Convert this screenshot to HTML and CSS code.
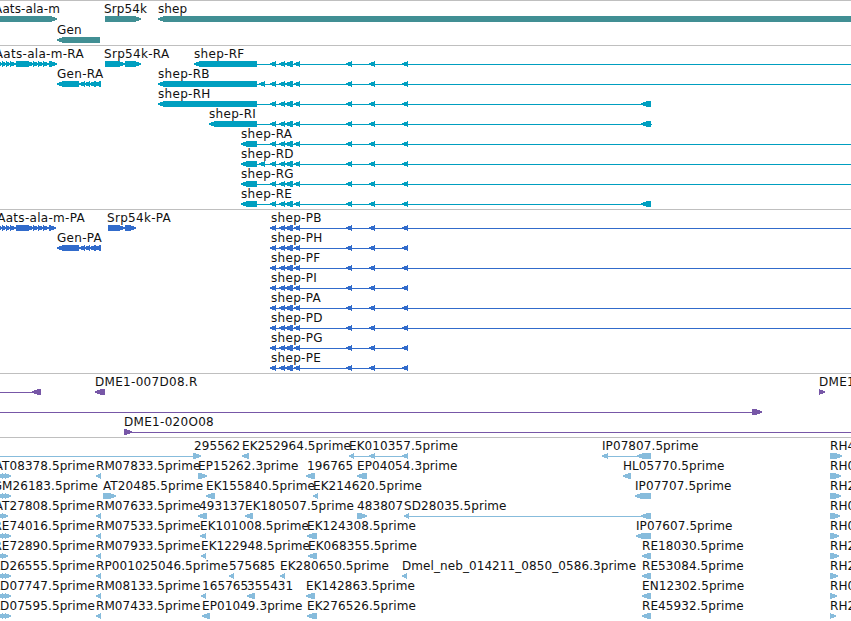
FILE: index.html
```html
<!DOCTYPE html>
<html lang="en">
<head>
  <meta charset="UTF-8">
  <title>Genome tracks</title>
  <link rel="stylesheet" href="styles.css">
</head>
<body>
  <div class="browser">
    <div class="track genes" id="genes"></div>
    <div class="track transcripts" id="transcripts"></div>
    <div class="track proteins" id="proteins"></div>
    <div class="track clones" id="clones"></div>
    <div class="track ests" id="ests"></div>
  </div>
  <script src="tracks.js"></script>
</body>
</html>
```
FILE: styles.css
```css
body {
  margin: 0;
  background-color: #fff;
  overflow: hidden;
}
.browser {
  border-bottom: 1px solid #bfbfbf;
}
.track {
  border-top: 1px solid #bfbfbf;
  padding-bottom: 3px;
}
.track svg {
  display: block;
  width: 100%;
  height: 20px;
  overflow: visible;
}
.track text {
  font-family: "DejaVu Sans", sans-serif;
  font-size: 12px;
  letter-spacing: 0.3px;
  fill: #111;
}
.track polygon, .track rect {
  shape-rendering: crispEdges;
}
.genes {
  fill: #418f94;
  padding-bottom: 2px;
}
.genes svg {
  height: 21px;
}
.genes text {
  letter-spacing: 0.1px;
}
.transcripts {
  fill: #009fc0;
}
.proteins {
  fill: #316bcb;
}
.clones {
  fill: #7757a7;
}
.ests {
  fill: #87bcdc;
}
.ests text {
  letter-spacing: 0.08px;
}
```
FILE: tracks.js
```js
const SVG = 'http://www.w3.org/2000/svg';
const EDGE = 851;

// feature: [label, label x, strand, blocks, line]
// a negative label x is the right end of a label that starts off screen
const aats = [[-2, 3], [2, 7], [6, 11], [10, 16], [16, 34], [33, 39], [38, 44], [43, 49]];
const gen = [[57, 79], [79, 85], [84, 90], [89, 96], [94, 101]];
const cds = [[279, 285], [285, 293], [294, 300], [346, 352], [369, 375], [402, 408]];
const shepExons = [[270, 276], ...cds];

function transcript(name, x, end, extra = []) {
  const blocks = [[x, 257], ...extra, ...shepExons];
  if (end < EDGE) blocks.push([641, 651]);
  return [name, x, '-', blocks, [257, end]];
}

function protein(name, end) {
  return [name, 271, '-', shepExons, [271, end]];
}

function rm(name) {
  return [name + '.5prime', 96, '-', [[96, 101]]];
}

function left(name, end = 95, last = 11) {
  return [name + '.5prime', -end, '+', [[-2, 4], [2, last - 3], [last - 6, last]]];
}

function est(name, x, start, end, strand = '-') {
  return [name, x, strand, [[start, end]]];
}

const tracks = {
  genes: [
    [['Aats-ala-m', -60, '+', [[-10, 57]]], ['Srp54k', 104, '+', [[105, 141]]], ['shep', 158, '-', [[158, 870]]]],
    [['Gen', 57, '-', [[57, 100]]]]
  ],
  transcripts: [
    [['Aats-ala-m-RA', -84, '+', [...aats, [49, 57]]], ['Srp54k-RA', 104, '+', [[105, 125], [125, 141]]], transcript('shep-RF', 194, EDGE)],
    [['Gen-RA', 57, '-', gen], transcript('shep-RB', 158, EDGE, [[259, 265]])],
    [transcript('shep-RH', 158, 651)],
    [transcript('shep-RI', 209, 652)],
    [transcript('shep-RA', 241, EDGE)],
    [transcript('shep-RD', 241, EDGE, [[259, 265]])],
    [transcript('shep-RG', 241, EDGE)],
    [transcript('shep-RE', 241, 651)]
  ],
  proteins: [
    [['Aats-ala-m-PA', -85, '+', [...aats, [49, 56]]], ['Srp54k-PA', 107, '+', [[108, 125], [125, 136]]], protein('shep-PB', EDGE)],
    [['Gen-PA', 57, '-', gen], protein('shep-PH', 408)],
    [protein('shep-PF', EDGE)],
    [protein('shep-PI', 408)],
    [protein('shep-PA', EDGE)],
    [protein('shep-PD', EDGE)],
    [protein('shep-PG', 408)],
    [protein('shep-PE', 408)]
  ],
  clones: [
    [['', 0, '-', [[32, 41]], [0, 33]], ['DME1-007D08.R', 95, '-', [[95, 105]]], ['DME1-', 819, '+', [[819, 825]]]],
    [['', 0, '+', [[752, 762]], [0, 753]]],
    [['DME1-020O08', 124, '+', [[124, 132]], [130, EDGE]]]
  ],
  ests: [
    [['295562', 194, '+', [[193, 201]], [0, 195]], est('EK252964.5prime', 242, 242, 249),
     ['EK010357.5prime', 349, '-', [[349, 354], [369, 375], [402, 408]], [349, 408]],
     ['IP07807.5prime', 602, '-', [[602, 608], [637, 651]], [602, 640]], est('RH4', 830, 830, 842, '+')],
    [left('AT08378'), rm('RM07833'), est('EP15262.3prime', 198, 198, 207, '+'), est('196765', 307, 306, 315),
     est('EP04054.3prime', 357, 357, 367), est('HL05770.5prime', 623, 623, 631), est('RH0', 830, 830, 841, '+')],
    [left('GM26183', 98), est('AT20485.5prime', 103, 103, 116, '+'), est('EK155840.5prime', 206, 206, 215),
     est('EK214620.5prime', 313, 313, 318), est('IP07707.5prime', 635, 635, 651), est('RH2', 830, 830, 841, '+')],
    [left('AT27808', 95, 8), rm('RM07633'), est('493137', 199, 198, 207), est('EK180507.5prime', 245, 245, 253),
     est('483807', 357, 357, 367, '+'), ['SD28035.5prime', 404, '-', [[404, 409], [641, 651]], [404, 643]], est('RH0', 830, 830, 840, '+')],
    [left('RE74016'), rm('RM07533'), est('EK101008.5prime', 200, 200, 206), est('EK124308.5prime', 307, 307, 317),
     est('IP07607.5prime', 636, 636, 651), est('RH0', 830, 830, 839, '+')],
    [left('RE72890', 95, 8), rm('RM07933'), est('EK122948.5prime', 201, 201, 206), est('EK068355.5prime', 308, 308, 317),
     est('RE18030.5prime', 642, 642, 651), est('RH2', 830, 830, 839, '+')],
    [left('LD26555'), rm('RP001025046'), est('575685', 229, 229, 234), est('EK280650.5prime', 280, 280, 285),
     est('Dmel_neb_014211_0850_0586.3prime', 402, 402, 407), est('RE53084.5prime', 642, 642, 651), est('RH2', 830, 830, 838, '+')],
    [left('LD07747'), rm('RM08133'), est('165765', 202, 201, 206), est('355431', 247, 247, 255),
     est('EK142863.5prime', 306, 306, 315), est('EN12302.5prime', 642, 642, 651), est('RH0', 830, 830, 837, '+')],
    [left('LD07595'), rm('RM07433'), est('EP01049.3prime', 202, 202, 210), est('EK276526.5prime', 307, 307, 317),
     est('RE45932.5prime', 642, 642, 651), est('RH2', 830, 830, 836, '+')]
  ]
};

function add(parent, tag, attrs) {
  const el = document.createElementNS(SVG, tag);
  for (const key in attrs) el.setAttribute(key, attrs[key]);
  parent.appendChild(el);
  return el;
}

// block with an arrow head on its downstream end
function addBlock(svg, start, end, strand) {
  const head = Math.min(6, end - start);
  const points = strand === '+'
    ? [[start, 15], [end - head, 15], [end, 17.4], [end, 18.6], [end - head, 21], [start, 21]]
    : [[end, 15], [start + head, 15], [start, 17.4], [start, 18.6], [start + head, 21], [end, 21]];
  add(svg, 'polygon', { points: points.join(' ') });
}

for (const id in tracks) {
  const track = document.getElementById(id);
  tracks[id].forEach(features => {
    const svg = add(track, 'svg', {});
    features.forEach(([label, x, strand, blocks, line]) => {
      if (line) add(svg, 'rect', { x: line[0], y: 18, width: line[1] - line[0], height: 1 });
      blocks.forEach(([start, end]) => addBlock(svg, start, end, strand));
      if (label) {
        const text = add(svg, 'text', { x: Math.abs(x), y: 12, 'text-anchor': x < 0 ? 'end' : 'start' });
        text.textContent = label;
      }
    });
  });
}
```
